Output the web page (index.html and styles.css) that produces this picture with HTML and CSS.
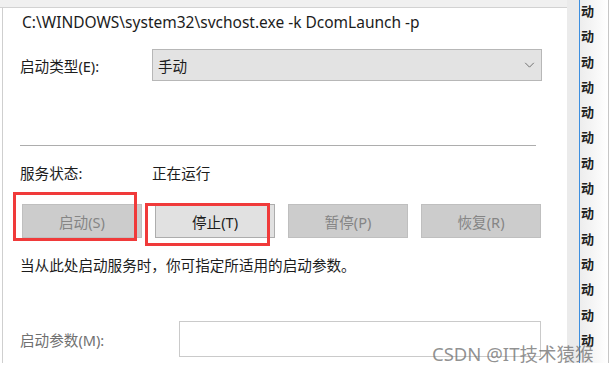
FILE: index.html
```html
<!DOCTYPE html>
<html lang="zh-CN">
<head>
  <meta charset="UTF-8" />
  <title>服务属性</title>
  <link rel="stylesheet" href="styles.css">
</head>
<body>

  <div class="screen">
    <div class="dialog">
      <div class="topband"></div>
      <div class="panel">
        <div class="path">C:\WINDOWS\system32\svchost.exe -k DcomLaunch -p</div>

        <div class="row startup">
          <span class="label">启动类型(E):</span>
          <div class="select">
            <span>手动</span>
            <svg class="chevron" viewBox="0 0 12 7" aria-hidden="true"><path d="M1 1l5 5 5-5"/></svg>
          </div>
        </div>

        <div class="sep"></div>

        <div class="row status">
          <span class="label">服务状态:</span>
          <span>正在运行</span>
        </div>

        <div class="buttons">
          <button class="btn" disabled>启动(S)</button>
          <button class="btn">停止(T)</button>
          <button class="btn" disabled>暂停(P)</button>
          <button class="btn" disabled>恢复(R)</button>
          <!-- 红框标注 -->
          <span class="mark mark-start"></span>
          <span class="mark mark-stop"></span>
        </div>

        <p class="hint">当从此处启动服务时，你可指定所适用的启动参数。</p>

        <div class="row params">
          <span class="label muted">启动参数(M):</span>
          <div class="input"></div>
        </div>
      </div>
    </div>

    <ul class="list">
      <li>动</li><li>动</li><li>动</li><li>动</li><li>动</li>
      <li>动</li><li>动</li><li>动</li><li>动</li><li>动</li>
      <li>动</li><li>动</li><li>动</li><li>动</li>
    </ul>
    <div class="edge"></div>

    <div class="watermark">CSDN @IT技术猿猴</div>
  </div>

</body>
</html>
```

FILE: styles.css
```css
* {
  box-sizing: border-box;
}

html, body {
  margin: 0;
  height: 100%;
  background: #fff;
}

body {
  font-family: "Noto Sans", "Noto Sans CJK SC", sans-serif;
  font-size: 14.6px;
  color: #1c1c1c;
}

.screen {
  position: relative;
  display: flex;
  height: 363px;
  overflow: hidden;
}

.dialog {
  width: 567px;
  display: flex;
  flex-direction: column;
}

.topband {
  height: 8px;
  background: #f0f0f0;
  border-bottom: 1px solid #d2d2d2;
}

.panel {
  flex: 1;
  margin-left: 2px;
  border-left: 1px solid #cfcfcf;
  padding: 4px 0 0 17px;
}

.path {
  margin-left: 2px;
  font-size: 15.5px;
  line-height: 20px;
}

.row {
  display: flex;
  align-items: center;
}

.label {
  width: 132px;
}

.muted {
  color: #707070;
}

.startup {
  margin-top: 17px;
  height: 32px;
}

.select {
  width: 390px;
  height: 32px;
  display: flex;
  align-items: center;
  justify-content: space-between;
  padding: 0 6px 0 5px;
  background: #e3e3e3;
  border: 1px solid #b7b7b7;
}

.chevron {
  width: 11px;
  height: 6px;
  fill: none;
  stroke: #6a6a6a;
  stroke-width: 1.1;
}

.sep {
  margin-top: 64px;
  width: 516px;
  height: 1px;
  background: #adadad;
}

.status {
  margin-top: 17px;
  line-height: 20px;
}

.buttons {
  position: relative;
  display: flex;
  gap: 13px;
  margin-top: 21px;
  padding-left: 2px;
}

.btn {
  width: 120px;
  height: 34px;
  padding: 0;
  font: inherit;
  color: #1c1c1c;
  background: #e1e1e1;
  border: 1px solid #adadad;
}

.btn:disabled {
  color: #858585;
  background: #cccccc;
  border-color: #bfbfbf;
}

.mark {
  position: absolute;
  border: 3px solid #f03a3a;
}

.mark-start {
  left: -7px;
  top: -12px;
  width: 124px;
  height: 49px;
}

.mark-stop {
  left: 125px;
  top: -1px;
  width: 125px;
  height: 43px;
}

.hint {
  margin: 17px 0 0;
  line-height: 20px;
}

.params {
  margin-top: 46px;
}

.input {
  width: 362px;
  height: 36px;
  margin-left: 27px;
  border: 1px solid #cacaca;
  background: #fff;
}

.list {
  width: 41px;
  margin: 0;
  padding: 0 0 0 14px;
  list-style: none;
  background: linear-gradient(to right, #ebebeb 0 12px, #3d8fe0 12px 13px, #ededed 13px, #fff 100%);
}

.list li {
  height: 25.3px;
  line-height: 25.3px;
  font-size: 13px;
  font-weight: 600;
  color: #222;
  transform: translateY(-1px);
}

.edge {
  flex: 1;
  border-left: 1px solid #c6c6c6;
}

.watermark {
  position: absolute;
  left: 432px;
  top: 342px;
  font-size: 18.5px;
  line-height: 24px;
  color: rgba(110, 110, 110, 0.75);
  white-space: nowrap;
}
```
